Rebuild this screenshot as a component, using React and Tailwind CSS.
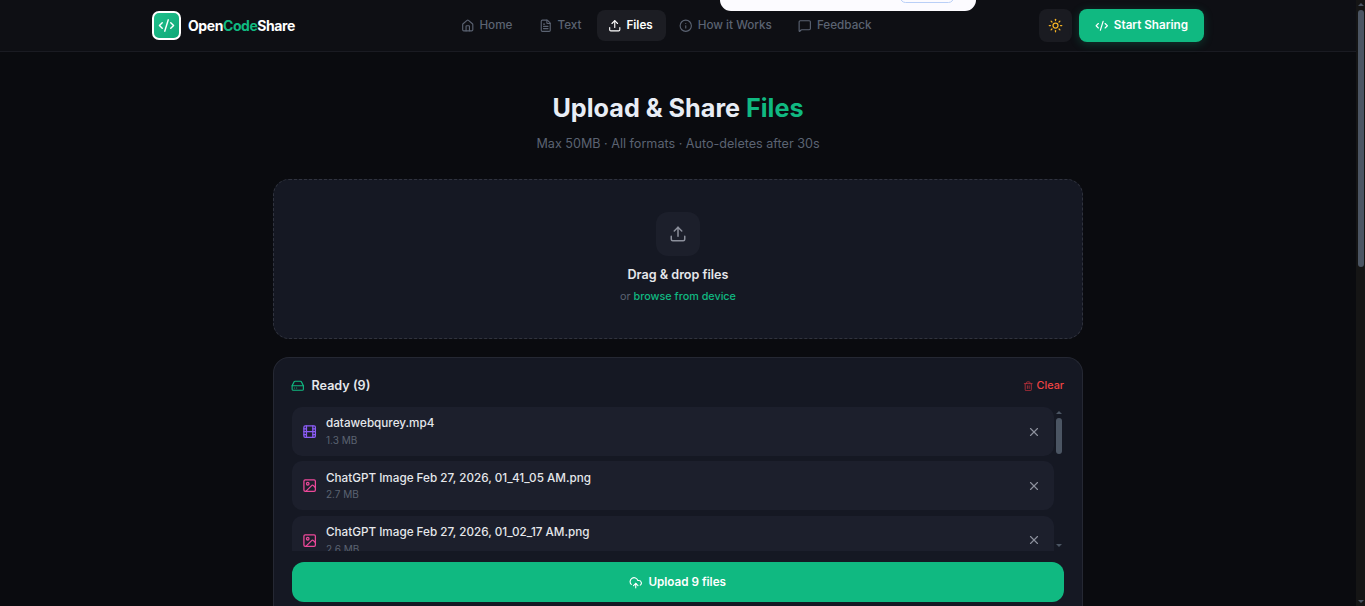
import React from "react";
import { CodeXml, FileText, Film, House, Image, Info, HardDrive, MessageSquare, Sun, Trash2, Upload, CloudUpload, X } from "lucide-react";

const links = [
  { label: "Home", icon: House },
  { label: "Text", icon: FileText },
  { label: "Files", icon: Upload, active: true },
  { label: "How it Works", icon: Info },
  { label: "Feedback", icon: MessageSquare },
];

const files = [
  { name: "datawebqurey.mp4", size: "1.3 MB", video: true },
  { name: "ChatGPT Image Feb 27, 2026, 01_41_05 AM.png", size: "2.7 MB" },
  { name: "ChatGPT Image Feb 27, 2026, 01_02_17 AM.png", size: "2.6 MB" },
];

const Logo = () => (
  <div className="w-[29px] h-[29px] rounded-[7px] border-2 border-white bg-gradient-to-br from-[#1fc08c] to-[#10a877] flex items-center justify-center">
    <CodeXml className="w-[17px] h-[17px] text-white" strokeWidth={2} />
  </div>
);

const Header = () => (
  <header className="h-[52px] shrink-0 border-b border-[#1a1b22] bg-[#0e0f14]">
    <div className="w-[1052px] h-full mx-auto flex items-center justify-between">
      <div className="flex items-center gap-[7px]">
        <Logo />
        <span className="text-[14px] font-bold text-white tracking-[-0.43px]">
          Open<span className="text-[#10b981]">Code</span>Share
        </span>
      </div>
      <nav className="flex items-center gap-[2.3px]">
        {links.map((l) => {
          const Icon = l.icon;
          return (
            <a
              key={l.label}
              className={`h-[31px] pl-[11px] pr-[12.8px] rounded-lg flex items-center gap-[5.4px] text-[11.7px] ${
                l.active ? "bg-[#1c1d23] text-white font-semibold" : "text-[#5b6372] font-medium"
              }`}
            >
              <Icon className="w-[13.5px] h-[13.5px]" strokeWidth={2} />
              {l.label}
            </a>
          );
        })}
      </nav>
      <div className="flex items-center gap-[7px]">
        <button className="w-[33px] h-[33px] rounded-lg bg-[#1a1b21] flex items-center justify-center">
          <Sun className="w-[15px] h-[15px] text-[#f5b324]" strokeWidth={2} />
        </button>
        <button className="w-[125px] h-[33px] rounded-lg bg-[#10b981] text-white text-[11.7px] font-semibold flex items-center justify-center gap-[5.4px] shadow-[0_2px_10px_rgba(16,185,129,0.25)]">
          <CodeXml className="w-[13.5px] h-[13.5px]" strokeWidth={2} />
          Start Sharing
        </button>
      </div>
    </div>
  </header>
);

const Dropzone = () => (
  <div className="w-[810px] h-[160px] mx-auto rounded-2xl border border-dashed border-[#30333e] bg-[#151823] flex flex-col items-center pt-[32px]">
    <div className="w-11 h-11 rounded-xl bg-[#1c1f2b] flex items-center justify-center">
      <Upload className="w-[18px] h-[18px] text-[#8b8f9b]" strokeWidth={2} />
    </div>
    <p className="mt-[10px] text-[12.6px] leading-[18px] font-semibold text-[#e5e7eb]">Drag &amp; drop files</p>
    <p className="mt-[5px] text-[10.8px] leading-[16px] text-[#5b6372]">
      or <span className="text-[#10b981] font-medium">browse from device</span>
    </p>
  </div>
);

const FileRow = ({ file }) => {
  const Icon = file.video ? Film : Image;
  return (
    <div className="h-[49px] shrink-0 rounded-[10px] bg-[#1c1f2c] flex items-center pl-[10px] pr-[13.5px]">
      <Icon className={`w-[15.3px] h-[15.3px] shrink-0 ${file.video ? "text-[#8b5cf6]" : "text-[#ec4899]"}`} strokeWidth={2} />
      <div className="ml-[8.7px] flex-1 min-w-0">
        <p className="mt-[0.3px] mb-[-0.3px] text-[11.7px] leading-[17px] font-medium text-[#e5e7eb]">{file.name}</p>
        <p className="text-[10px] leading-[16px] text-[#5b6372]">{file.size}</p>
      </div>
      <X className="w-[14px] h-[14px] text-[#8b8f9b]" strokeWidth={2} />
    </div>
  );
};

const ReadyCard = () => (
  <div className="w-[810px] mx-auto mt-[18px] rounded-t-2xl border border-b-0 border-[#252833] bg-[#151823] px-[18px] pt-[18px] pb-[20px]">
    <div className="h-[20px] flex items-center justify-between">
      <div className="flex items-center gap-[7px] -ml-[1px]">
        <HardDrive className="w-[13.5px] h-[13.5px] text-[#10b981]" strokeWidth={2} />
        <span className="text-[12.6px] font-semibold text-[#e5e7eb]">Ready (9)</span>
      </div>
      <div className="flex items-center gap-[3px] text-[10.8px] font-medium text-[#ef4444]">
        <Trash2 className="w-[10.5px] h-[10.5px] text-[#b3303a]" strokeWidth={2} />
        Clear
      </div>
    </div>
    <div className="mt-[11px] h-[144px] overflow-hidden flex">
      <div className="flex-1 min-w-0 flex flex-col gap-[5.4px]">
        {files.map((f) => (
          <FileRow key={f.name} file={f} />
        ))}
      </div>
      <div className="w-[10px] flex flex-col items-center">
        <div className="w-0 h-0 mt-[4px] border-x-[3px] border-x-transparent border-b-[3px] border-b-[#4b5563]" />
        <div className="w-[6px] h-[36px] mt-[4px] rounded-full bg-[#4b5563]" />
        <div className="flex-1" />
        <div className="w-0 h-0 mb-[4px] border-x-[3px] border-x-transparent border-t-[3px] border-t-[#4b5563]" />
      </div>
    </div>
    <button className="mt-[11px] w-full h-[40px] pt-[1px] pr-[1px] rounded-xl bg-[#10b981] text-white text-[11.7px] font-semibold flex items-center justify-center gap-[5.9px]">
      <CloudUpload className="w-[13.5px] h-[13.5px]" strokeWidth={2} />
      Upload 9 files
    </button>
  </div>
);

const PageScrollbar = () => (
  <div className="w-[9px] shrink-0 bg-[#151515] flex flex-col items-start pl-[2px]">
    <div className="w-0 h-0 mt-[3px] border-x-[3px] border-x-transparent border-b-[3px] border-b-[#4b5563]" />
    <div className="w-[6px] h-[257px] mt-[4px] rounded-full bg-[#4b5563]" />
    <div className="flex-1" />
    <div className="w-0 h-0 mb-[3px] border-x-[3px] border-x-transparent border-t-[3px] border-t-[#4b5563]" />
  </div>
);

export default function App() {
  return (
    <div className="relative w-full h-[606px] overflow-hidden flex bg-[#0a0b0f] font-['Inter',sans-serif]">
      <div className="flex-1 min-w-0 flex flex-col">
        <Header />
        <main className="flex-1 overflow-hidden">
          <h1 className="mt-[38px] text-center text-[25.2px] leading-[36px] font-bold text-[#e8edf5]">
            Upload &amp; Share <span className="text-[#10b981]">Files</span>
          </h1>
          <p className="mt-[8px] mb-[25px] text-center text-[12.6px] leading-[20px] text-[#5b6372]">
            Max 50MB · All formats · Auto-deletes after 30s
          </p>
          <Dropzone />
          <ReadyCard />
        </main>
      </div>
      <PageScrollbar />
      <div className="absolute top-0 left-[720px] w-[256px] h-[11px] rounded-b-[11px] bg-[#fcfbff] overflow-hidden">
        <div className="absolute left-[180px] top-[-8px] w-[54px] h-[11px] rounded-full border border-[#b9cff7]" />
      </div>
    </div>
  );
}
